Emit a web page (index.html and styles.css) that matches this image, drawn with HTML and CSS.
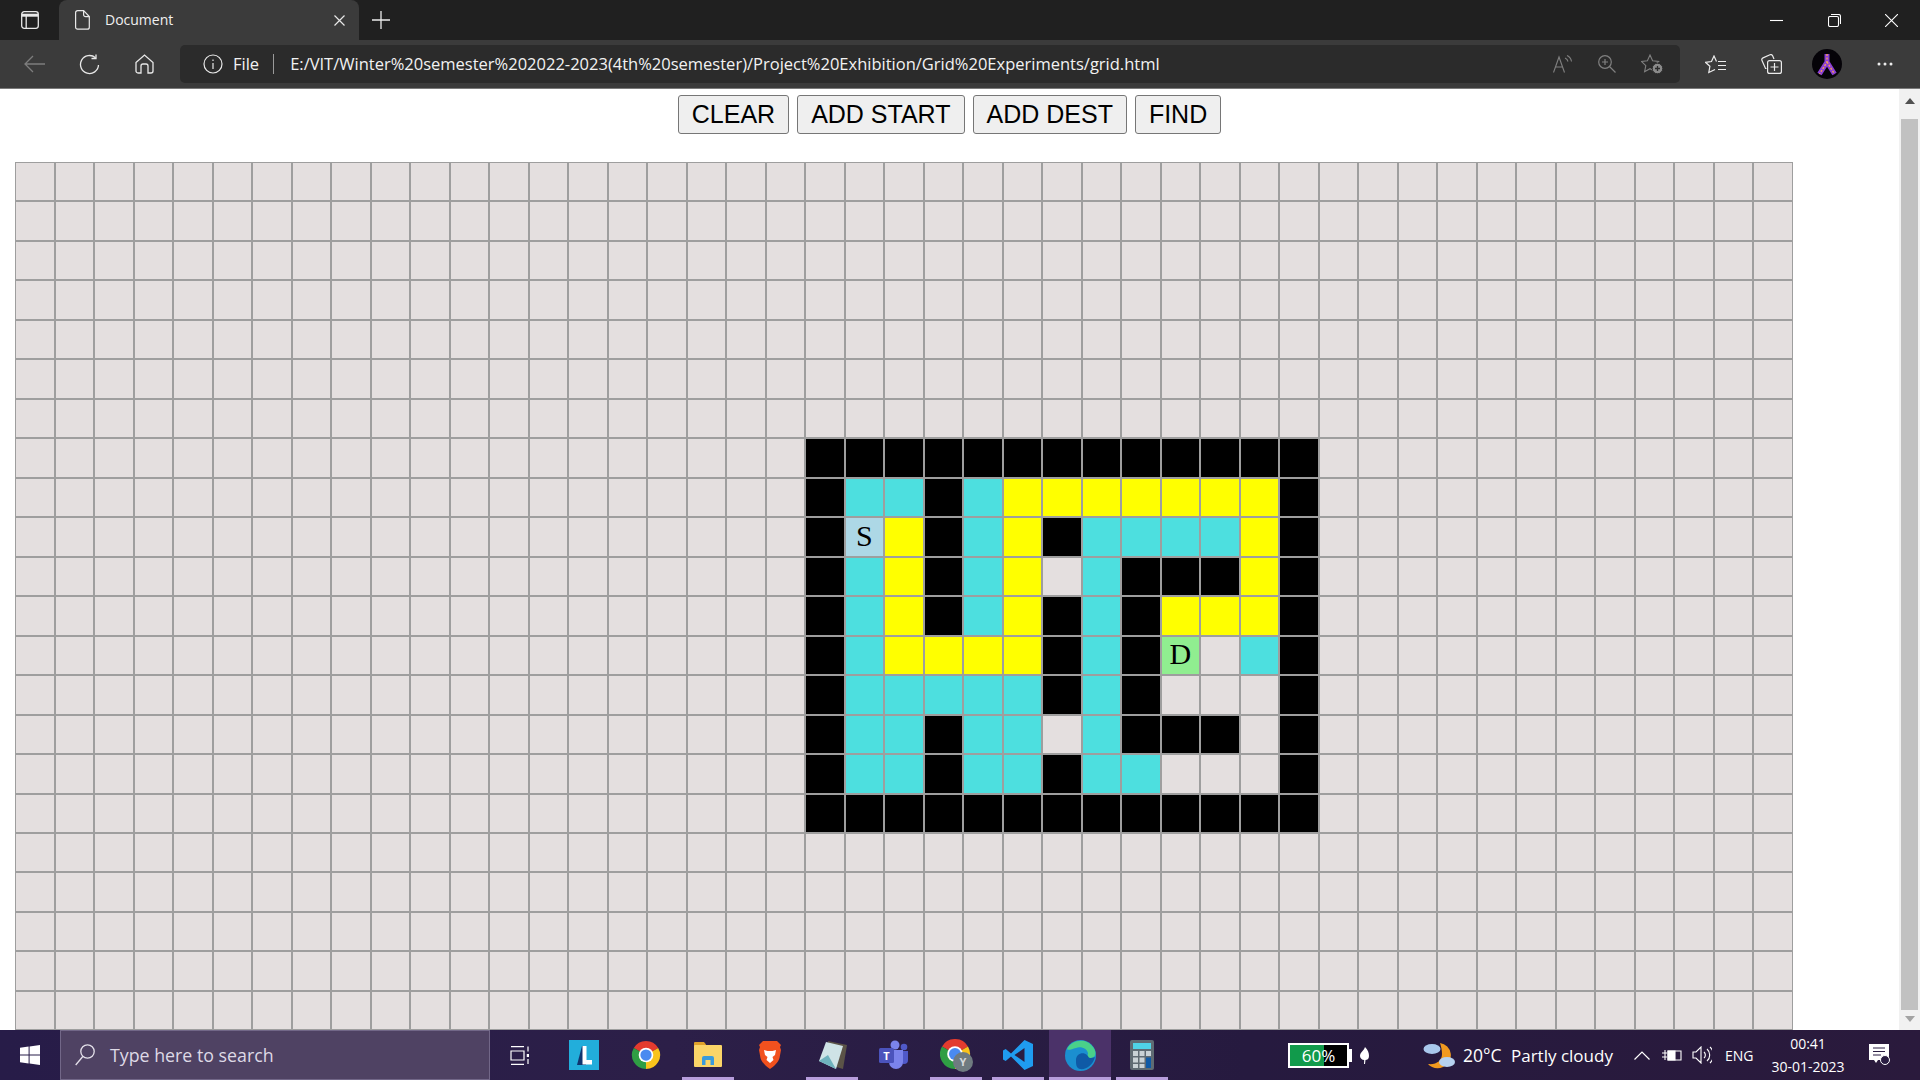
FILE: index.html
```html
<!DOCTYPE html>
<html lang="en">
<head>
    <meta charset="UTF-8">
    <meta name="viewport" content="width=device-width, initial-scale=1.0">
    <title>Document</title>
    <link rel="stylesheet" href="styles.css">
</head>
<body>

    <!-- Browser tabs -->
    <div class="tabstrip">
        <div class="tab-side">
            <svg width="18" height="18" viewBox="0 0 18 18" fill="none" stroke="#e8e8e8" stroke-width="1.3"><rect x=".7" y=".7" width="16.6" height="16.6" rx="2.5"/><path d="M1 4.2h16" stroke-width="3"/><path d="M5.2 4v13"/></svg>
        </div>
        <div class="tab">
            <svg width="15" height="20" viewBox="0 0 15 20" fill="none" stroke="#e8e8e8" stroke-width="1.2"><path d="M2.6.7h6l5.7 5.8v10.7a2 2 0 0 1-2 2H2.6a2 2 0 0 1-2-2V2.700a2 2 0 0 1 2-2z"/><path d="M8.600.7v4a2 2 0 0 0 2 2h3.700"/></svg>
            <span class="tab-title">Document</span>
            <svg class="tab-close" width="11" height="11" viewBox="0 0 11 11" stroke="#e8e8e8" stroke-width="1.2"><path d="M.5.5l10 10M10.500.5l-10 10"/></svg>
        </div>
        <svg class="tab-new" width="18" height="18" viewBox="0 0 18 18" stroke="#ececec" stroke-width="1.3"><path d="M9 0v18M0 9h18"/></svg>
        <div class="win-btns">
            <svg width="13" height="13" viewBox="0 0 13 13" stroke="#fff" stroke-width="1.1"><path d="M0 6.500h13"/></svg>
            <svg width="13" height="13" viewBox="0 0 13 13" fill="none" stroke="#fff" stroke-width="1.1"><rect x=".5" y="2.500" width="10" height="10" rx="1.500"/><path d="M3 .5h7.500a2 2 0 0 1 2 2V10"/></svg>
            <svg width="13" height="13" viewBox="0 0 13 13" stroke="#fff" stroke-width="1.1"><path d="M0 0l13 13M13 0L0 13"/></svg>
        </div>
    </div>

    <!-- Address bar -->
    <div class="toolbar">
        <div class="nav-btn">
            <svg width="21" height="18" viewBox="0 0 21 18" fill="none" stroke="#7d7d7d" stroke-width="1.3"><path d="M21 9H1M9 1L1 9l8 8"/></svg>
        </div>
        <div class="nav-btn">
            <svg width="21" height="21" viewBox="0 0 21 21" fill="none" stroke="#e8e8e8" stroke-width="1.3"><path d="M16.500 3.800A9 9 0 1 0 19.500 11"/><path d="M17 .5v4h-4.500"/></svg>
        </div>
        <div class="nav-btn">
            <svg width="19" height="20" viewBox="0 0 19 20" fill="none" stroke="#e8e8e8" stroke-width="1.3"><path d="M1 8.500L9.500 1 18 8.500V17a2 2 0 0 1-2 2h-3v-7a2 2 0 0 0-2-2H8a2 2 0 0 0-2 2v7H3a2 2 0 0 1-2-2z"/></svg>
        </div>
        <div class="addr">
            <svg width="20" height="20" viewBox="0 0 20 20" fill="none" stroke="#e8e8e8" stroke-width="1.2"><circle cx="10" cy="10" r="9"/><path d="M10 9v6M10 5.500v1.500"/></svg>
            <span class="addr-file">File</span>
            <span class="addr-sep"></span>
            <span class="addr-url">E:/VIT/Winter%20semester%202022-2023(4th%20semester)/Project%20Exhibition/Grid%20Experiments/grid.html</span>
            <div class="addr-icons">
                <svg width="20" height="18" viewBox="0 0 20 18" fill="none" stroke="#808080" stroke-width="1.1"><path d="M.5 17.500L6 2l5.500 15.500M2.500 12h7"/><path d="M12 3a5 5 0 0 1 3 3.500M14 .5a8 8 0 0 1 4.500 6"/></svg>
                <svg width="18" height="18" viewBox="0 0 18 18" fill="none" stroke="#808080" stroke-width="1.200"><circle cx="7" cy="7" r="6.300"/><path d="M11.500 11.500L17.500 17.500M7 4v6M4 7h6"/></svg>
                <svg width="22" height="20" viewBox="0 0 22 20" fill="none" stroke="#808080" stroke-width="1.100"><path d="M9 1l2.600 5.700 6 .7-4.400 4.200 1.200 6L9 14.700l-5.400 3 1.200-6L.4 7.400l6-.7z"/><circle cx="16.500" cy="14.500" r="5.300" fill="#8a8a8a" stroke="#2b2b2b" stroke-width="1"/><path d="M16.500 12v5M14 14.500h5" stroke="#2b2b2b" stroke-width="1.300"/></svg>
            </div>
        </div>
        <div class="tool-btn">
            <svg width="21" height="19" viewBox="0 0 21 19" fill="none" stroke="#ececec" stroke-width="1.200"><path d="M11.500 6.500L9 1 6.500 6.500l-6 .8 4.400 4-1.100 6.200L10 14.500"/><path d="M13 6.500h8M13 10.500h8M13 14.500h8"/></svg>
        </div>
        <div class="tool-btn">
            <svg width="21" height="20" viewBox="0 0 21 20" fill="none" stroke="#ececec" stroke-width="1.200"><path d="M5.500 14.500H4.500L1 6.500a2 2 0 0 1 1-2.600L9 .8a2 2 0 0 1 2.600 1L13 5"/><rect x="6.600" y="6.600" width="13.800" height="12.800" rx="2"/><path d="M13.500 9v8M9.500 13h8"/></svg>
        </div>
        <div class="tool-btn">
            <svg width="30" height="30" viewBox="0 0 30 30"><circle cx="15" cy="15" r="15" fill="#050308"/><path d="M15 5v8L7.500 25M15 13l7.500 12" fill="none" stroke="#8a3fd6" stroke-width="5"/><path d="M15 5v8L7.500 25M15 13l7.500 12" fill="none" stroke="#f09a5a" stroke-width="1.500" stroke-dasharray="2 1.500"/></svg>
        </div>
        <div class="tool-btn tool-mas">
            <svg width="16" height="4" viewBox="0 0 16 4" fill="#ececec"><circle cx="2" cy="2" r="1.500"/><circle cx="8" cy="2" r="1.500"/><circle cx="14" cy="2" r="1.500"/></svg>
        </div>
    </div>

    <!-- Page content -->
    <div class="page">
        <div class="viewport">
            <div class="botones">
                <button>CLEAR</button>
                <button>ADD START</button>
                <button>ADD DEST</button>
                <button>FIND</button>
            </div>
            <div class="grid" id="grid"></div>
        </div>
        <div class="scrollbar">
            <span class="arrow-up"></span>
            <span class="thumb"></span>
            <span class="arrow-down"></span>
        </div>
    </div>

    <!-- Windows taskbar -->
    <div class="taskbar">
        <div class="start">
            <svg width="20" height="20" viewBox="0 0 20 20" fill="#fff"><path d="M0 2.800L8.600 1.600v7.900H0zM9.600 1.500L20 0v9.500H9.600zM0 10.500h8.600v7.900L0 17.200zM9.600 10.500H20V20L9.600 18.500z"/></svg>
        </div>
        <div class="search">
            <svg width="20" height="22" viewBox="0 0 20 22" fill="none" stroke="#e4e0ea" stroke-width="1.300"><circle cx="12.500" cy="7.500" r="6.700"/><path d="M7.800 12.500L.7 21"/></svg>
            <span>Type here to search</span>
        </div>
        <div class="apps">
            <div class="app app-vista">
                <svg width="19" height="19" viewBox="0 0 19 19" fill="none" stroke="#fff" stroke-width="1.200"><path d="M1 .6h13M1 18.400h13M1 5h13v9H1zM18 .6v5M18 13v5"/><path d="M18 8v3" stroke-width="2.500"/></svg>
            </div>
            <div class="app">
                <svg width="30" height="30" viewBox="0 0 30 30"><rect width="30" height="30" fill="#22aedb"/><path d="M8 25L13 6h4v19z" fill="#10356f"/><path d="M13.500 6H17.500V20H23V24.500H13.500z" fill="#fff"/></svg>
            </div>
            <div class="app">
                <svg width="30" height="30" viewBox="0 0 32 32"><path d="M16 16L3 8.500A15 15 0 0 1 29 8.500z" fill="#e33b2e"/><path d="M16 16L29 8.500A15 15 0 0 1 16 31z" fill="#f9c31c"/><path d="M16 16L16 31A15 15 0 0 1 3 8.500z" fill="#2f9e44"/><circle cx="16" cy="16" r="7.800" fill="#fff"/><circle cx="16" cy="16" r="6" fill="#4a8af0"/></svg>
            </div>
            <div class="app abierta">
                <svg width="28" height="28" viewBox="0 0 28 28"><path d="M0 2a1 1 0 0 1 1-1h9l2 2.500v3H0z" fill="#e0a22a"/><rect y="4" width="28" height="22" rx="1" fill="#fbd568"/><path d="M8 24V17a2 2 0 0 1 2-2h8a2 2 0 0 1 2 2v7h-3.500v-5h-5v5z" fill="#3a9bdc"/></svg>
            </div>
            <div class="app">
                <svg width="26" height="30" viewBox="0 0 26 30"><path d="M6 1h14l4 4-1 2 1 3-1.500 8c-1 4-6 9-9.500 11C9.500 27 4.500 22 3.500 18L2 10l1-3-1-2z" fill="#f1511e"/><path d="M7 10l3.500 1h5L19 10l-1 5-2.500 2 1 3-3.500 3-3.500-3 1-3L8 15z" fill="#fff"/></svg>
            </div>
            <div class="app abierta">
                <svg width="29" height="30" viewBox="0 0 29 30"><path d="M10 1l19 4-4 24-10-3z" fill="#5b5347"/><path d="M8 2l17 4-7 23L1 21z" fill="#cfe3e6"/><path d="M1 21l9-6 8 14z" fill="#6fb2bd"/></svg>
            </div>
            <div class="app">
                <svg width="30" height="30" viewBox="0 0 30 30"><circle cx="16" cy="5" r="4.500" fill="#7b83eb"/><circle cx="25" cy="7" r="3.300" fill="#5059c9"/><path d="M21 11h8v9a4 4 0 0 1-8 0z" fill="#5059c9"/><path d="M10 10h14v12a7 7 0 0 1-14 0z" fill="#7b83eb"/><rect y="8" width="15" height="15" rx="1.500" fill="#4b53bc"/><text x="7.500" y="20" class="teams-t">T</text></svg>
            </div>
            <div class="app abierta">
                <svg width="33" height="33" viewBox="0 0 33 33"><path d="M15 15L2 7.500A15 15 0 0 1 28 7.500z" fill="#e33b2e"/><path d="M15 15L28 7.500A15 15 0 0 1 15 30z" fill="#f9c31c"/><path d="M15 15L15 30A15 15 0 0 1 2 7.500z" fill="#2f9e44"/><circle cx="15" cy="15" r="7.800" fill="#fff"/><circle cx="15" cy="15" r="6" fill="#4a8af0"/><circle cx="23" cy="23" r="10" fill="#6f7b80"/><text x="23" y="27" class="chrome-y">Y</text></svg>
            </div>
            <div class="app abierta">
                <svg width="30" height="30" viewBox="0 0 30 30"><path d="M21.500 0L30 4v22l-8.500 4L8 16.500 2.700 21 0 19.500V10.500L2.700 9 8 13.500z" fill="#1f9cf0"/><path d="M21.500 8L11.500 15l10 7z" fill="#2a1d42"/></svg>
            </div>
            <div class="app abierta activa">
                <svg width="31" height="31" viewBox="0 0 31 31"><circle cx="15.500" cy="15.500" r="15.500" fill="#1b8fd0"/><path d="M2 9C6 0 21-3 28 7c4 5 3 11-2 11-4 0-4-2-3-4 0-5-7-8-12-6C7 9 3 11 2 9z" fill="#4ad08a"/><path d="M11 20c0-6 7-9 11-5 2 2 1 3 4 3 2 0 4-1 4-1-2 8-9 13-15 12-4-1-4-5-4-9z" fill="#0f5aa6"/></svg>
            </div>
            <div class="app abierta">
                <svg width="24" height="30" viewBox="0 0 24 30"><rect width="24" height="30" rx="2" fill="#5f6b73"/><rect x="3" y="3" width="18" height="6" fill="#4fd3e6"/><path d="M3 11h5v5H3zM9.500 11h5v5h-5zM16 11h5v5h-5zM3 17.500h5v5H3zM9.500 17.500h5v5h-5zM3 24h5v4H3zM9.500 24h5v4h-5z" fill="#c9d2d6"/><rect x="16" y="17.500" width="5" height="10.500" fill="#0f5aa6"/></svg>
            </div>
        </div>

        <div class="tray">
            <div class="meter">
                <div class="meter-box"><span>60%</span></div>
                <span class="meter-nub"></span>
            </div>
            <svg class="leaf" width="9" height="17" viewBox="0 0 9 17" fill="#fff"><path d="M5 0c3 3 4 6 4 9 0 3-2 4-3.500 4L5 17H4l.2-4C2 13 0 11 0 9c0-4 4-5 5-9z"/></svg>
            <svg class="clima" width="32" height="28" viewBox="0 0 32 28"><path d="M17 2a12.500 12.500 0 0 1 3 24c-5 2.500-12 1-15-3 8 1 14-3 14-10 0-4-1-8-2-11z" fill="#f19a1f"/><ellipse cx="9" cy="8" rx="8.500" ry="5" fill="#a9c8ec"/><ellipse cx="24" cy="21" rx="8" ry="5" fill="#b6d2f0"/></svg>
            <span class="temp">20°C</span>
            <span class="estado">Partly cloudy</span>
            <svg class="chevron" width="16" height="9" viewBox="0 0 16 9" fill="none" stroke="#fff" stroke-width="1.200"><path d="M.5 8.500L8 1l7.500 7.500"/></svg>
            <svg class="sys-bat" width="20" height="14" viewBox="0 0 20 14" fill="none" stroke="#fff" stroke-width="1.100"><path d="M6 3h13v9H6z"/><path d="M6 3h7v9H6z" fill="#fff"/><path d="M0 5h5M0 9h5M3 2v10"/></svg>
            <svg class="sys-vol" width="20" height="18" viewBox="0 0 20 18" fill="none" stroke="#fff" stroke-width="1.100"><path d="M1 6h3l5-5v16l-5-5H1zM12 6a4 4 0 0 1 0 6M15 3a8 8 0 0 1 0 12M18 1a11 11 0 0 1 0 16"/></svg>
            <span class="lang">ENG</span>
            <div class="reloj">
                <span>00:41</span>
                <span>30-01-2023</span>
            </div>
            <svg class="notif" width="22" height="22" viewBox="0 0 22 22"><path d="M0 0h20v16H9l-2 3-2-3H0z" fill="#fff"/><path d="M4 4h12M4 7.500h12M4 11h8" stroke="#2a1d42" stroke-width="1.200"/><circle cx="16" cy="16" r="4.500" fill="#2a1d42" stroke="#fff" stroke-width="1"/></svg>
        </div>
    </div>

    <script src="grid.js"></script>

</body>
</html>
```

FILE: styles.css
```css
/* Pagina completa */
html, body {
    height: 100%;
}
body {
    margin: 0;
    display: flex;
    flex-direction: column;
    height: 100vh;
    overflow: hidden;
    font-family: "Open Sans", "Noto Sans", sans-serif;
    background-color: #ffffff;
}
svg {
    display: block;
    flex: none;
}

/* Pestanas */
.tabstrip {
    display: flex;
    align-items: center;
    height: 40px;
    flex: none;
    background-color: #202020;
}
.tab-side {
    width: 59px;
    height: 40px;
    display: flex;
    align-items: center;
    padding-left: 21px;
    box-sizing: border-box;
}
.tab {
    width: 300px;
    height: 40px;
    box-sizing: border-box;
    display: flex;
    align-items: center;
    padding: 0 14px 0 16px;
    background-color: #3b3b3b;
    border-radius: 8px 8px 0 0;
    color: #f0f0f0;
}
.tab-title {
    margin: 0 0 2px 15px;
    font-size: 14px;
}
.tab-close {
    margin-left: auto;
}
.tab-new {
    margin-left: 13px;
}
.win-btns {
    margin-left: auto;
    display: flex;
    align-items: center;
    gap: 44px;
    padding-right: 22px;
}
.win-btns svg:first-child {
    margin-right: 1px;
}

/* Barra de direcciones */
.toolbar {
    display: flex;
    align-items: center;
    height: 48px;
    flex: none;
    padding: 0 7px 0 7px;
    background-color: #3b3b3b;
    border-bottom: 1px solid #7a7a7a;
}
.nav-btn {
    width: 55px;
    display: flex;
    justify-content: center;
}
.tool-btn {
    width: 56px;
    display: flex;
    justify-content: center;
}
.tool-mas {
    margin-left: 2px;
}
.addr {
    flex: 1;
    height: 38px;
    margin: 0 7px 0 8px;
    display: flex;
    align-items: center;
    padding: 0 17px 0 23px;
    background-color: #2b2b2b;
    border-radius: 5px;
    color: #f2f2f2;
    font-size: 16.5px;
}
.addr-file {
    margin: 0 0 2px 10px;
}
.addr-sep {
    width: 1px;
    height: 20px;
    margin: 0 16px 0 14px;
    background-color: #9a9a9a;
}
.addr-url {
    margin-bottom: 2px;
    white-space: nowrap;
}
.addr-icons {
    margin-left: auto;
    display: flex;
    align-items: center;
    gap: 25px;
}

/* Contenido */
.page {
    flex: 1;
    min-height: 0;
    display: flex;
}
.viewport {
    flex: 1;
    overflow: hidden;
}
.botones {
    display: flex;
    justify-content: center;
    gap: 8px;
    padding-top: 6px;
}
button {
    height: 39px;
    padding: 0 13px;
    font-family: "Liberation Sans", Arial, sans-serif;
    font-size: 25px;
    color: #000000;
    background-color: #efefef;
    border: 1px solid #767676;
    border-radius: 3px;
}
.grid {
    display: grid;
    grid-template-columns: repeat(45, 37.75px);
    grid-auto-rows: 37.47px;
    column-gap: 1.75px;
    row-gap: 2px;
    width: max-content;
    margin: 28px 0 0 15px;
    padding: 1px;
    background-color: #9e9e9e;
}
.celda {
    display: flex;
    align-items: center;
    justify-content: center;
    padding-bottom: 2px;
    box-sizing: border-box;
    background-color: #e4dfdf;
    font-family: "Liberation Serif", "Times New Roman", serif;
    font-size: 30px;
    line-height: 34px;
    color: #000000;
}
.muro { background-color: #000000; }
.visitada { background-color: #4ddfdf; }
.camino { background-color: #ffff00; }
.inicio { background-color: #add8e6; }
.destino { background-color: #90ee90; }

/* Barra de desplazamiento */
.scrollbar {
    width: 21px;
    flex: none;
    display: flex;
    flex-direction: column;
    align-items: center;
    background-color: #f1f1f1;
}
.arrow-up {
    margin-top: 9px;
    border: 5px solid transparent;
    border-top: 0;
    border-bottom: 6px solid #505050;
}
.thumb {
    width: 17px;
    height: 891px;
    margin-top: 15px;
    background-color: #c1c1c1;
}
.arrow-down {
    margin-top: 6px;
    border: 5px solid transparent;
    border-bottom: 0;
    border-top: 6px solid #a3a3a3;
}

/* Barra de tareas */
.taskbar {
    display: flex;
    align-items: center;
    height: 50px;
    flex: none;
    background: linear-gradient(90deg, #271c48, #2c1f48 35%, #261a3f 65%, #2a1a3c);
    color: #ffffff;
}
.start {
    width: 60px;
    display: flex;
    justify-content: center;
}
.search {
    width: 430px;
    height: 50px;
    box-sizing: border-box;
    display: flex;
    align-items: center;
    padding-left: 14px;
    background-color: #4f4263;
    border: 1px solid #726788;
    color: #ded9e6;
    font-size: 17.8px;
}
.search span {
    margin-left: 15px;
}
.apps {
    display: flex;
    flex: none;
    margin-left: 1px;
}
.app {
    position: relative;
    width: 62px;
    height: 50px;
    display: flex;
    align-items: center;
    justify-content: center;
}
.app-vista svg {
    margin-right: 5px;
}
.app.abierta::after {
    content: "";
    position: absolute;
    left: 5px;
    right: 5px;
    bottom: 0;
    height: 3px;
    background-color: #b79ddc;
}
.app.activa {
    background-color: #4b3269;
}
.app.activa::after {
    left: 0;
    right: 0;
}
.teams-t {
    font-family: "Open Sans", sans-serif;
    font-size: 11px;
    font-weight: 700;
    fill: #ffffff;
    text-anchor: middle;
}
.chrome-y {
    font-family: "Open Sans", sans-serif;
    font-size: 11px;
    font-weight: 700;
    fill: #d5d9db;
    text-anchor: middle;
}
.tray {
    margin-left: auto;
    display: flex;
    align-items: center;
    padding-right: 29px;
    font-size: 17px;
}
.meter {
    display: flex;
    align-items: center;
}
.meter-box {
    width: 61px;
    height: 25px;
    box-sizing: border-box;
    display: flex;
    align-items: center;
    justify-content: center;
    border: 2px solid #ffffff;
    background: linear-gradient(90deg, #119a4b 60%, #000000 60%);
    font-size: 17px;
}
.meter-nub {
    width: 3px;
    height: 13px;
    background-color: #ffffff;
}
.leaf { margin-left: 8px; }
.clima { margin-left: 54px; }
.temp {
    width: 38px;
    margin-left: 8px;
    font-size: 17.5px;
    white-space: nowrap;
}
.estado {
    width: 102px;
    margin-left: 10px;
    white-space: nowrap;
}
.chevron { margin-left: 21px; }
.sys-bat { margin-left: 12px; }
.sys-vol { margin-left: 10px; }
.lang {
    width: 28px;
    margin-left: 13px;
    font-size: 14px;
}
.reloj {
    width: 76px;
    margin-left: 17px;
    display: flex;
    flex-direction: column;
    align-items: center;
    gap: 3px;
    font-size: 14px;
    line-height: 20px;
    white-space: nowrap;
}
.notif { margin-left: 23px; }
```

FILE: grid.js
```js
// Tablero de 45 columnas; solo se ven 22 filas
const COLUMNAS = 45;
const FILAS = 23;

// Zona dibujada: B muro, C visitada, Y camino, S inicio, D destino, . vacia
const FILA_BASE = 7;
const COLUMNA_BASE = 20;
const zona = [
    'BBBBBBBBBBBBB',
    'BCCBCYYYYYYYB',
    'BSYBCYBCCCCYB',
    'BCYBCY.CBBBYB',
    'BCYBCYBCBYYYB',
    'BCYYYYBCBD.CB',
    'BCCCCCBCB...B',
    'BCCBCC.CBBB.B',
    'BCCBCCBCC...B',
    'BBBBBBBBBBBBB'
];
const clases = { B: 'muro', C: 'visitada', Y: 'camino', S: 'inicio', D: 'destino' };

const grid = document.getElementById('grid');
for (let f = 0; f < FILAS; f++) {
    for (let c = 0; c < COLUMNAS; c++) {
        const div = document.createElement('div');
        div.classList.add('celda');
        const fila = zona[f - FILA_BASE];
        const letra = fila ? fila[c - COLUMNA_BASE] : undefined;
        if (letra && clases[letra]) {
            div.classList.add(clases[letra]);
        }
        if (letra === 'S' || letra === 'D') {
            div.textContent = letra;
        }
        grid.appendChild(div);
    }
}
```
